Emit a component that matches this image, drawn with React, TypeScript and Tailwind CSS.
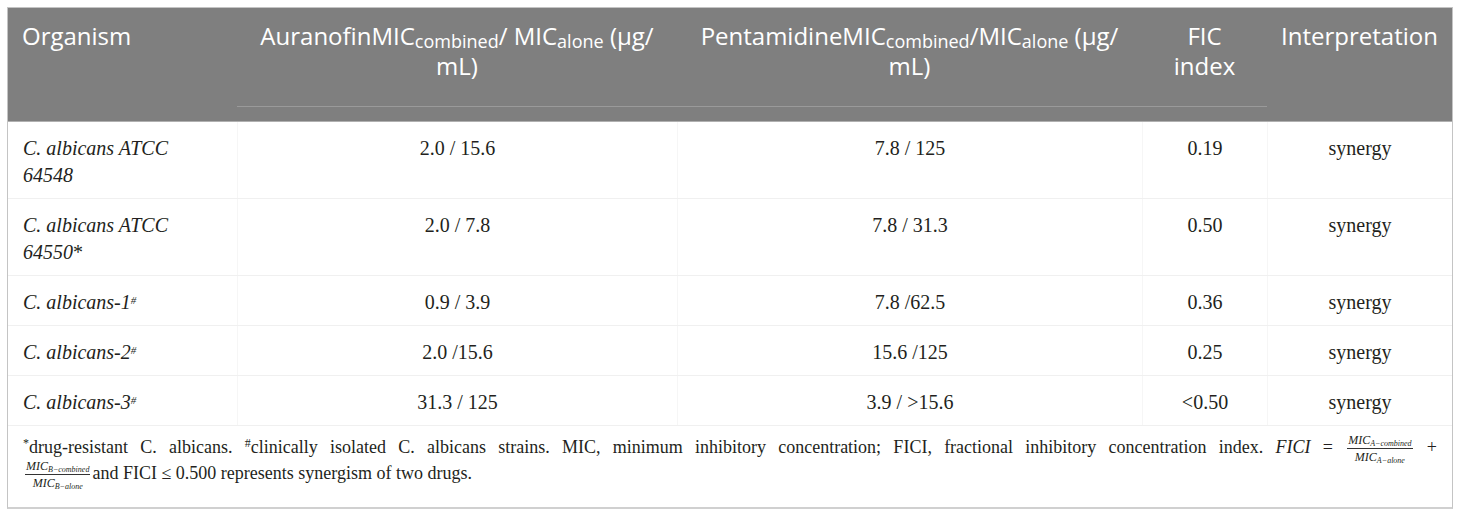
import React from "react";

const sans = "font-['Open_Sans',sans-serif]";
const serif = "font-['Liberation_Serif',serif]";

function Frac({ l }: { l: string }) {
  return (
    <span className="inline-flex flex-col items-center align-middle leading-none italic text-[12px] mx-[2px] relative -top-[1px]">
      <span className="border-b border-[#333] px-[1px] pb-[2px]">
        MIC<span className="text-[8px] relative top-[2px]">{l}−combined</span>
      </span>
      <span className="pt-[2px]">
        MIC<span className="text-[8px] relative top-[2px]">{l}−alone</span>
      </span>
    </span>
  );
}

type Row = { org: React.ReactNode; a: string; p: string; f: string };

const rows: Row[] = [
  { org: <>C. albicans ATCC<br />64548</>, a: "2.0 / 15.6", p: "7.8 / 125", f: "0.19" },
  { org: <>C. albicans ATCC<br />64550<span className="not-italic">*</span></>, a: "2.0 / 7.8", p: "7.8 / 31.3", f: "0.50" },
  { org: <>C. albicans-1<sup className="text-[11px]">#</sup></>, a: "0.9 / 3.9", p: "7.8 /62.5", f: "0.36" },
  { org: <>C. albicans-2<sup className="text-[11px]">#</sup></>, a: "2.0 /15.6", p: "15.6 /125", f: "0.25" },
  { org: <>C. albicans-3<sup className="text-[11px]">#</sup></>, a: "31.3 / 125", p: "3.9 / >15.6", f: "<0.50" },
];

const grid = "grid grid-cols-[229px_440px_465px_125px_185px]";
const sub = "text-[18px] relative top-[3px] align-baseline leading-none";

export default function App() {
  return (
    <div className="bg-white w-[1460px] h-[516px] pt-[7px] pl-[7px]">
      <div className="w-[1446px] border border-[#c4c4c4] border-b-2 border-b-[#d0d0d0] text-[#231f20]">
        {/* header */}
        <div className={`bg-[#7f7f7f] text-white ${sans} text-[24px] leading-[30px] border-b border-[#b0b0b0]`}>
          <div className={`${grid} h-[99px]`}>
            <div className="pl-[14px] pt-[13px]">Organism</div>
            <div className="pt-[13px] text-center border-b border-[#9a9a9a]">
              <div className="h-[30px]">
                AuranofinMIC<span className={sub}>combined</span>/ MIC<span className={sub}>alone</span> (µg/
              </div>
              <div className="h-[30px]">mL)</div>
            </div>
            <div className="pt-[13px] text-center border-b border-[#9a9a9a]">
              <div className="h-[30px]">
                PentamidineMIC<span className={sub}>combined</span>/MIC<span className={sub}>alone</span> (µg/
              </div>
              <div className="h-[30px]">mL)</div>
            </div>
            <div className="pt-[13px] text-center border-b border-[#9a9a9a]">
              <div className="h-[30px]">FIC</div>
              <div className="h-[30px]">index</div>
            </div>
            <div className="pt-[13px] text-center">Interpretation</div>
          </div>
          <div className="h-[14px]" />
        </div>
        {/* body */}
        <div className={`${serif} text-[20px] leading-[27px]`}>
          {rows.map((r, i) => (
            <div key={i} className={`${grid} border-b border-[#f0f0f0]`}>
              <div className="pl-[15px] pt-[13px] pb-[9px] italic">{r.org}</div>
              <div className="pt-[13px] pb-[9px] text-center border-l border-[#f6f6f6]">{r.a}</div>
              <div className="pt-[13px] pb-[9px] text-center border-l border-[#f6f6f6]">{r.p}</div>
              <div className="pt-[13px] pb-[9px] text-center border-l border-[#f6f6f6]">{r.f}</div>
              <div className="pt-[13px] pb-[9px] text-center border-l border-[#f6f6f6]">synergy</div>
            </div>
          ))}
        </div>
        {/* footnote */}
        <div className={`${serif} text-[18px] px-[15px] pt-[10px] pb-[19px]`}>
          <div className="h-[26px] flex items-center">
            <div className="w-full text-justify [text-align-last:justify] leading-[26px]">
              <sup className="text-[12px]">*</sup>drug-resistant C. albicans. <sup className="text-[12px]">#</sup>clinically isolated C. albicans strains. MIC, minimum inhibitory concentration; FICI, fractional inhibitory concentration index. <i>FICI</i> = <Frac l="A" /> +
            </div>
          </div>
          <div className="h-[26px] flex items-center leading-[26px]">
            <div>
              <Frac l="B" />and FICI ≤ 0.500 represents synergism of two drugs.
            </div>
          </div>
        </div>
      </div>
    </div>
  );
}
